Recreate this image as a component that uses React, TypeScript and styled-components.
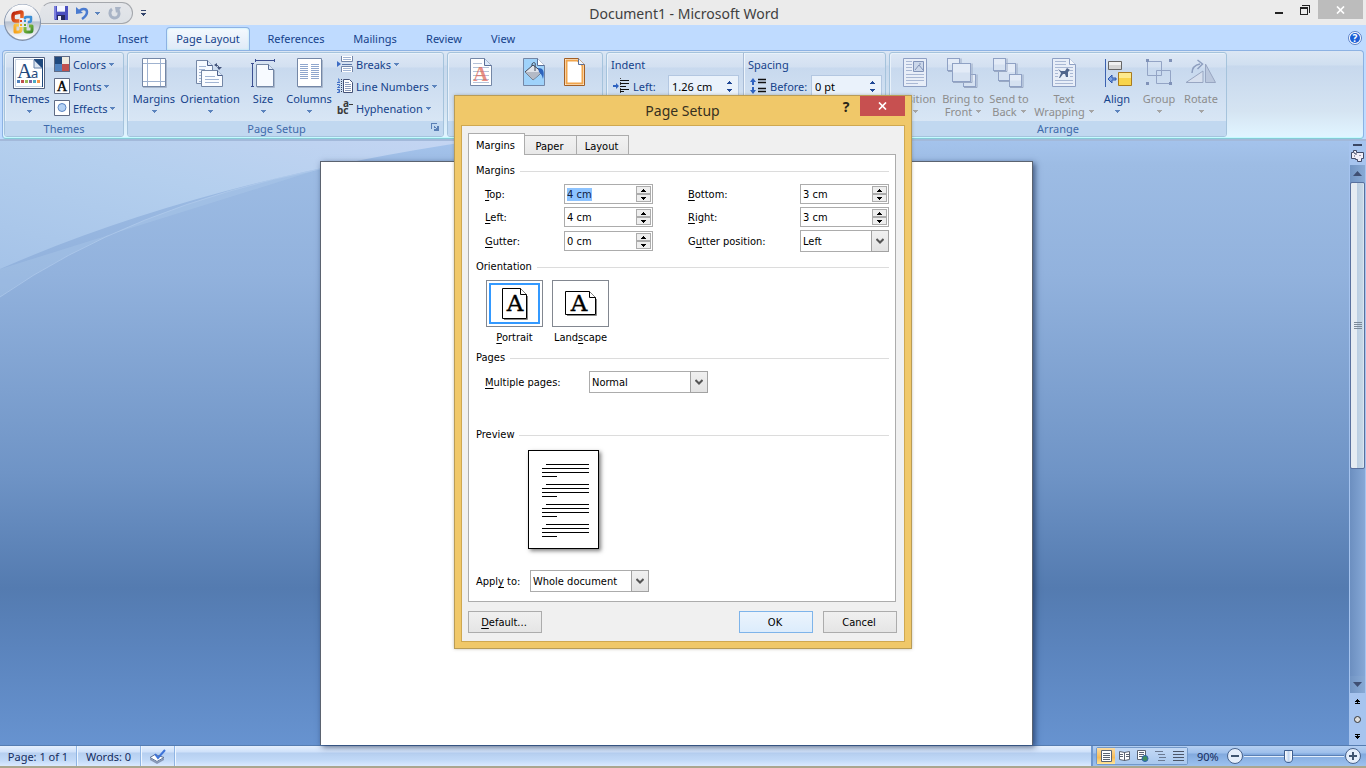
import React, { useEffect, useRef } from "react";
import styled, { createGlobalStyle, css } from "styled-components";

const uiFont = `"Noto Sans", "Open Sans", sans-serif`;
const dialogFont = `"DejaVu Sans Condensed", "DejaVu Sans", sans-serif`;
const navy = "#15428b";
const muted = "#8d8d8d";

const GlobalStyle = createGlobalStyle`
  * { box-sizing: border-box; }
  body { margin: 0; overflow: hidden; font-family: ${uiFont}; font-size: 11px; color: ${navy}; }
  button, input, select { font: inherit; color: inherit; margin: 0; padding: 0; border-radius: 0; }
  button { background: none; border: 0; }
  svg { display: block; flex: none; }
`;

const Window = styled.div`
  display: flex;
  flex-direction: column;
  height: 100vh;
  position: relative;
  background: #bfdbff;
`;

/* ---------- title bar ---------- */

const TitleBar = styled.header`
  display: flex;
  align-items: flex-start;
  height: 25px;
  background: #ebebeb;
  padding-left: 40px;
`;

const QuickAccess = styled.div`
  display: flex;
  align-items: center;
  gap: 8px;
  width: 93px;
  height: 22px;
  margin-top: 2px;
  padding-left: 13px;
  border: 1px solid #a4a7ac;
  border-left-color: transparent;
  border-radius: 12px 11px 11px 0;
  background: linear-gradient(#e4e6ea, #dde1e6);
`;

const PlainButton = styled.button`
  display: flex;
  align-items: center;
  justify-content: center;
`;

const SplitTool = styled(PlainButton)`
  gap: 5px;
`;

const CustomizeButton = styled(PlainButton)`
  width: 21px;
  height: 25px;
`;

const WindowTitle = styled.h1`
  flex: 1;
  margin: 0;
  padding-right: 52px;
  font-size: 14px;
  line-height: 27px;
  font-weight: 400;
  text-align: center;
  color: #404040;
`;

const WindowControls = styled.div`
  display: flex;
  padding-right: 3px;
`;

const WindowButton = styled(PlainButton)<{ $close?: boolean }>`
  width: ${(p) => (p.$close ? 45 : 26)}px;
  height: 19px;
  background: ${(p) => (p.$close ? "#bcbcbc" : "transparent")};
`;

const OfficeButton = styled(PlainButton)`
  position: absolute;
  left: 3px;
  top: 3px;
  z-index: 2;
`;

/* ---------- tabs ---------- */

const TabRow = styled.nav`
  display: flex;
  align-items: flex-end;
  height: 25px;
  padding: 0 4px 0 46px;
`;

const RibbonTab = styled.button<{ $width: number; $active?: boolean }>`
  width: ${(p) => p.$width}px;
  height: 23px;
  padding-bottom: 1px;
  border: 1px solid transparent;
  border-bottom: 0;
  border-radius: 4px 4px 0 0;
  ${(p) =>
    p.$active &&
    css`
      margin: 0 2px 0 4px;
      border-color: #8db2e3;
      background: linear-gradient(#f4f9fe, #dfeaf7);
      box-shadow: inset 0 0 2px #9be8f5;
    `}
`;

const Spacer = styled.div`
  flex: 1;
`;

const HelpButton = styled(PlainButton)`
  align-self: center;
`;

/* ---------- ribbon ---------- */

const Ribbon = styled.section`
  display: flex;
  gap: 3px;
  height: 89px;
  margin: 0 2px;
  padding: 1px 1px 2px;
  border: 1px solid #8db2e3;
  border-bottom-color: #86cbd6;
  border-radius: 4px;
  background: linear-gradient(#dbe6f4 0, #d0dff0 14px, #c7d8ed 15px, #d5e4f2 60px, #e0f4ff 84px);
  box-shadow: inset 0 -1px 0 #c4fbff;
`;

const Group = styled.section<{ $width: number }>`
  display: flex;
  flex-direction: column;
  width: ${(p) => p.$width}px;
  height: 85px;
  border: 1px solid #a5c3dc;
  border-radius: 3px;
  background: linear-gradient(#dde8f5 0, #d3e0f1 14px, #c8d9ee 15px, #d8e6f5 68px);
  box-shadow: inset 1px 1px 0 #e8f1fa;
  overflow: hidden;
`;

const GroupBody = styled.div<{ $pad?: number }>`
  display: flex;
  flex: 1;
  padding-left: ${(p) => p.$pad ?? 1}px;
`;

const GroupTitle = styled.div<{ $launcher?: boolean }>`
  position: relative;
  display: flex;
  align-items: center;
  justify-content: center;
  height: 15px;
  padding-right: ${(p) => (p.$launcher ? 18 : 0)}px;
  line-height: 15px;
  color: #3e6aaa;
  background: #c1d8f0;
`;

const Launcher = styled(PlainButton)`
  position: absolute;
  right: 4px;
  top: 2px;
`;

const LargeTool = styled.button<{ $width: number }>`
  display: flex;
  flex-direction: column;
  align-items: center;
  width: ${(p) => p.$width}px;
  padding-top: 4px;
  line-height: 13px;
  white-space: nowrap;
  color: ${navy};
  &:disabled { color: ${muted}; }
`;

const ToolLabel = styled.span`
  margin-top: 3px;
`;

const ToolSecondLine = styled.span`
  display: flex;
  align-items: center;
  gap: 4px;
  height: 13px;
`;

const SmallStack = styled.div<{ $gap: number }>`
  display: flex;
  flex-direction: column;
  margin-left: ${(p) => p.$gap}px;
`;

const SmallTool = styled.button`
  display: flex;
  align-items: center;
  gap: 3px;
  height: 22px;
  white-space: nowrap;
`;

const ParagraphColumn = styled.div<{ $width: number; $divided?: boolean }>`
  width: ${(p) => p.$width}px;
  padding-left: ${(p) => (p.$divided ? 4 : 3)}px;
  ${(p) => p.$divided && css`border-left: 1px solid #a9bcd6; box-shadow: inset 1px 0 0 #eef5fc;`}
`;

const ColumnHeading = styled.div`
  height: 22px;
  padding-top: 1px;
  line-height: 22px;
`;

const MeasureRow = styled.label`
  display: flex;
  align-items: center;
  height: 22px;
  padding-left: 2px;
`;

const MeasureName = styled.span<{ $width: number }>`
  width: ${(p) => p.$width}px;
  padding-left: 4px;
`;

const MeasureBox = styled.span`
  display: flex;
  align-items: center;
  width: 71px;
  height: 22px;
  padding: 0 6px 0 3px;
  border: 1px solid #b3c7e1;
  background: #eaf2fb;
  color: #000;
`;

const MeasureInput = styled.input`
  flex: 1;
  min-width: 0;
  border: 0;
  background: none;
  outline: none;
`;

/* ---------- document area ---------- */

const Workspace = styled.main`
  position: relative;
  display: flex;
  flex: 1;
  min-height: 0;
  background: linear-gradient(#a4c3ec 0, #9dbce4 4%, #92b2dd 22%, #6f94c6 55%, #547bb0 74%, #5b84bd 84%, #6793d0 100%);
  border-top: 2px solid #a3b9da;
`;

const Swoosh = styled.svg`
  position: absolute;
  left: 0;
  top: 0;
`;

const Canvas = styled.div`
  position: relative;
  display: flex;
  flex: 1;
  justify-content: center;
  padding: 20px 0 0 4px;
`;

const Paper = styled.article`
  width: 713px;
  border: 1px solid #5b6370;
  border-bottom: 0;
  background: #fff;
  box-shadow: 2px 2px 6px rgba(20, 40, 80, 0.7);
`;

const ScrollColumn = styled.div`
  position: relative;
  display: flex;
  flex-direction: column;
  align-items: center;
  width: 17px;
  background: #a6c4ef;
`;

const SplitHandle = styled.div`
  width: 9px;
  height: 2px;
  margin: 3px 0 4px;
  background: #3b4764;
`;

const ScrollArrow = styled(PlainButton)<{ $top?: number }>`
  width: 15px;
  height: 17px;
  margin-top: ${(p) => p.$top ?? 0}px;
  background: linear-gradient(90deg, #7295c4, #89aad5);
`;

const ScrollTrack = styled.div`
  flex: 1;
  width: 15px;
  background: linear-gradient(90deg, #6c8fc0, #86a8d6);
`;

const ScrollThumb = styled.div`
  display: flex;
  align-items: center;
  justify-content: center;
  width: 15px;
  height: 58%;
  border: 1px solid #5a719e;
  border-radius: 2px;
  background: linear-gradient(90deg, #e6ecf2 0 45%, #bccfe2 50%, #c8d8e6 90%, #e6eef6);
`;

const BrowseButtons = styled.div`
  display: flex;
  flex-direction: column;
  align-items: center;
  justify-content: space-around;
  height: 52px;
`;

/* ---------- status bar ---------- */

const StatusBar = styled.footer`
  display: flex;
  height: 23px;
  line-height: 19px;
  border-top: 1px solid #567db1;
  border-bottom: 2px solid #aaa68f;
  background: linear-gradient(#e4effd 0, #cfe1fa 6px, #b6cff0 7px, #c1d9f7 14px, #dbeaff 20px);
  color: #152c5e;
`;

const StatusItem = styled.button<{ $width: number }>`
  display: flex;
  align-items: center;
  justify-content: center;
  width: ${(p) => p.$width}px;
  border-right: 1px solid #8fb4e3;
  box-shadow: 1px 0 0 #eef6ff;
`;

const ZoomArea = styled.div`
  display: flex;
  align-items: center;
  width: 275px;
  padding: 0 5px 0 1px;
  border-left: 2px solid #6f97cd;
  background: linear-gradient(#b4cff2 0, #9dbfeb 7px, #81a9de 8px, #9dc2ef 20px);
`;

const ViewButtons = styled.div`
  display: flex;
  height: 18px;
  margin: 0 9px 0 2px;
  border: 1px solid #7298c9;
  border-radius: 2px;
`;

const ViewButton = styled(PlainButton)<{ $active?: boolean }>`
  width: 18px;
  height: 16px;
  background: linear-gradient(#c3d9f5, #a9c8ee);
  ${(p) => p.$active && css`background: linear-gradient(#fbdca2, #f7bb54 60%, #ffe69a);`}
`;

const ZoomValue = styled.span`
  width: 30px;
`;

const ZoomSlider = styled.input`
  flex: 1;
  min-width: 0;
  height: 18px;
  margin: 0 1px;
  appearance: none;
  background: linear-gradient(#5a80b5, #5a80b5) 0 8px / 100% 1px no-repeat,
    linear-gradient(#e2eefc, #e2eefc) 0 9px / 100% 1px no-repeat;
  &::-webkit-slider-thumb {
    appearance: none;
    width: 9px;
    height: 13px;
    border: 1px solid #3f5f90;
    border-radius: 1px 1px 5px 5px;
    background: linear-gradient(90deg, #fff, #c3d7f1 50%, #fff);
  }
`;

/* ---------- dialog ---------- */

const Overlay = styled.div`
  position: absolute;
  inset: 0;
  z-index: 5;
  display: flex;
  justify-content: center;
  align-items: flex-start;
  padding-top: 95px;
`;

const Dialog = styled.section`
  width: 458px;
  padding: 0 6px 6px;
  border: 1px solid #b99c56;
  background: #f0c869;
  box-shadow: 0 0 3px rgba(90, 80, 50, 0.35);
  font-family: ${dialogFont};
  color: #000;
`;

const DialogHeader = styled.header`
  display: flex;
  align-items: flex-start;
  height: 29px;
`;

const DialogTitle = styled.h2`
  flex: 1;
  margin: 0;
  padding-left: 67px;
  font-family: ${uiFont};
  font-size: 14px;
  font-weight: 400;
  line-height: 29px;
  text-align: center;
  color: #37301f;
`;

const DialogHelp = styled(PlainButton)`
  width: 18px;
  height: 20px;
  margin-right: 5px;
  font-family: ${uiFont};
  font-size: 14px;
  font-weight: 700;
  color: #2a2518;
`;

const DialogClose = styled(PlainButton)`
  width: 45px;
  height: 20px;
  background: #c75050;
`;

const DialogBody = styled.div`
  padding: 7px 7px 8px 6px;
  border: 1px solid #cfa850;
  background: #f0f0f0;
`;

const DialogTabs = styled.div`
  display: flex;
  align-items: flex-end;
  height: 22px;
`;

const DialogTab = styled.button<{ $width: number; $active?: boolean }>`
  width: ${(p) => p.$width}px;
  height: 20px;
  padding: 2px 2px 0 0;
  border: 1px solid #acacac;
  border-left-width: ${(p) => (p.$active ? 1 : 0)}px;
  background: linear-gradient(#f2f2f2, #e8e8e8);
  ${(p) =>
    p.$active &&
    css`
      position: relative;
      z-index: 1;
      height: 22px;
      border-bottom: 0;
      background: #fff;
    `}
`;

const TabPanel = styled.div`
  margin: -1px 1px 0 0;
  padding: 9px 6px 9px 7px;
  border: 1px solid #acacac;
  background: #fff;
`;

const SectionTitle = styled.h3<{ $top?: number }>`
  display: flex;
  align-items: center;
  gap: 5px;
  margin: ${(p) => p.$top ?? 0}px 0 6px;
  font-size: 11px;
  font-weight: 400;
  line-height: 14px;
  &::after { content: ""; flex: 1; height: 1px; background: #dcdcdc; }
`;

const FieldGrid = styled.div`
  display: grid;
  grid-template-columns: 79px 89px 1fr 89px;
  row-gap: 3px;
  align-items: center;
  padding-left: 9px;
`;

const FieldName = styled.label<{ $inset?: boolean }>`
  padding: 2px 0 0 ${(p) => (p.$inset ? 35 : 0)}px;
  line-height: 14px;
  u { text-underline-offset: 2px; }
`;

const SpinFrame = styled.span`
  display: flex;
  height: 20px;
  padding: 1px;
  border: 1px solid #acacac;
  background: #fff;
`;

const SpinInput = styled.input`
  flex: 1;
  min-width: 0;
  padding-left: 1px;
  border: 0;
  outline: none;
  background: none;
  &::selection { background: #8cc3ff; color: #102040; }
`;

const SpinButtons = styled.span`
  display: flex;
  flex-direction: column;
  width: 15px;
`;

const SpinButton = styled(PlainButton)`
  flex: 1;
  border: 1px solid #acacac;
  background: #eee;
`;

const SelectFrame = styled.span<{ $width: number }>`
  position: relative;
  display: block;
  width: ${(p) => p.$width}px;
  height: 22px;
`;

const Select = styled.select`
  width: 100%;
  height: 22px;
  padding-left: 2px;
  appearance: none;
  border: 1px solid #acacac;
  background: #fff;
  outline: none;
`;

const SelectArrow = styled.span`
  position: absolute;
  right: 0;
  top: 0;
  display: flex;
  align-items: center;
  justify-content: center;
  width: 18px;
  height: 22px;
  border: 1px solid #a2a2a2;
  background: linear-gradient(#f0f0f0, #e3e3e3);
  pointer-events: none;
`;

const OrientationRow = styled.div`
  display: flex;
  gap: 9px;
  padding-left: 10px;
`;

const OrientationOption = styled.button`
  display: flex;
  flex-direction: column;
  align-items: center;
  gap: 4px;
  width: 57px;
  line-height: 14px;
  u { text-underline-offset: 2px; }
`;

const OrientationCard = styled.span<{ $selected?: boolean }>`
  display: flex;
  align-items: center;
  justify-content: center;
  width: 57px;
  height: 47px;
  border: 1px solid #828790;
  outline: ${(p) => (p.$selected ? "2px solid #3399ff" : "none")};
  outline-offset: -5px;
`;

const InlineField = styled.div<{ $top?: number; $label: number; $indent?: number }>`
  display: grid;
  grid-template-columns: ${(p) => p.$label}px auto;
  justify-content: start;
  align-items: center;
  margin-top: ${(p) => p.$top ?? 0}px;
  padding-left: ${(p) => p.$indent ?? 0}px;
`;

const PreviewSheet = styled.div`
  width: 71px;
  height: 99px;
  margin: 8px 0 0 52px;
  border: 1px solid #000;
  background: #fff;
  box-shadow: 2px 2px 4px rgba(0, 0, 0, 0.5);
`;

const DialogFooter = styled.footer`
  display: flex;
  gap: 10px;
  margin-top: 9px;
`;

const PushButton = styled.button<{ $primary?: boolean }>`
  width: 74px;
  height: 22px;
  padding-right: 2px;
  border: 1px solid ${(p) => (p.$primary ? "#7eb4ea" : "#acacac")};
  background: ${(p) => (p.$primary ? "linear-gradient(#ecf4fc, #dcecfc)" : "linear-gradient(#f0f0f0, #e5e5e5)")};
  u { text-underline-offset: 2px; }
`;

/* ---------- drawings ---------- */

const Caret = ({ color = "#5b83bd" }: { color?: string }) => (
  <svg width="5" height="3" viewBox="0 0 5 3" shapeRendering="crispEdges">
    <path d="M0 0h5v1H4v1H3v1H2V2H1V1H0z" fill={color} />
  </svg>
);

const SpinTriangle = ({ down, color = "#000" }: { down?: boolean; color?: string }) => (
  <svg width="5" height="3" viewBox="0 0 5 3" shapeRendering="crispEdges">
    <path d={down ? "M0 0h5v1H4v1H3v1H2V2H1V1H0z" : "M2 0h1v1h1v1h1v1H0V2h1V1h1z"} fill={color} />
  </svg>
);

const Icon = ({ size = 32, children }: { size?: number; children: React.ReactNode }) => (
  <svg width={size} height={size} viewBox={`0 0 ${size} ${size}`} overflow="visible">{children}</svg>
);

const OfficeLogo = () => (
  <svg width="39" height="39" viewBox="0 0 39 39">
    <defs>
      <linearGradient id="orb" x1="0" y1="0" x2="0" y2="1">
        <stop offset="0" stopColor="#fff" />
        <stop offset="0.46" stopColor="#e3e6ec" />
        <stop offset="0.5" stopColor="#b8c2d1" />
        <stop offset="1" stopColor="#fff" />
      </linearGradient>
      <linearGradient id="logoRed" x1="0" y1="0" x2="1" y2="1">
        <stop offset="0" stopColor="#b9200c" />
        <stop offset="1" stopColor="#f5772b" />
      </linearGradient>
      <linearGradient id="logoYellow" x1="0" y1="1" x2="1" y2="0">
        <stop offset="0" stopColor="#f6a11b" />
        <stop offset="1" stopColor="#fdd55a" />
      </linearGradient>
      <linearGradient id="logoGreen" x1="0" y1="0" x2="1" y2="1">
        <stop offset="0" stopColor="#8fc63d" />
        <stop offset="1" stopColor="#3f8a2c" />
      </linearGradient>
    </defs>
    <circle cx="19.500" cy="19.500" r="18.500" fill="#8292ab" />
    <circle cx="19.500" cy="19" r="17.500" fill="url(#orb)" />
    <g fill="none" strokeLinejoin="round">
      <path d="M17 18h-4q-3 0-3-3v-2q0-3 3-3l5-1q1 0 1 1v5" stroke="url(#logoRed)" strokeWidth="3.500" />
      <path d="M22 18v-3q0-1 1-1h5v3q0 2-2 2h-1" stroke="#3c8fd6" strokeWidth="2.500" />
      <path d="M16 22h-3q-1 0-1 1v6h3q3 0 3-3v-2" stroke="url(#logoYellow)" strokeWidth="3" />
      <path d="M22 24v3q0 2 2 2h3q2 0 2-2v-4h-3" stroke="url(#logoGreen)" strokeWidth="3" />
    </g>
    <path d="M16 16h8v8h-8z" fill="#fff" fillOpacity="0.500" />
    <path d="M17 17h2v2h-2z" fill="#e2431c" />
    <path d="M21 17h2v2h-2z" fill="#3c8fd6" />
    <path d="M17 21h2v2h-2z" fill="#f3ab22" />
    <path d="M21 21h2v2h-2z" fill="#65a82e" />
  </svg>
);

const SaveIcon = () => (
  <svg width="14" height="14" viewBox="0 0 14 14">
    <path d="M0 0h14v14H1L0 13z" fill="#4a4fc0" />
    <path d="M0 0h2v13H0z" fill="#7c80dc" />
    <path d="M3 0h8v6H3z" fill="#f4f6ff" />
    <path d="M3 5h8v1H3z" fill="#b7c0e8" />
    <path d="M3 9h8v5H3z" fill="#25285e" />
    <path d="M4 10h3v4H4z" fill="#eceffa" />
  </svg>
);

const UndoIcon = () => (
  <svg width="14" height="14" viewBox="0 0 14 14">
    <path d="M3 6c2-4 8-4 8 0 0 3-2 5-5 7" fill="none" stroke="#4a7bd0" strokeWidth="2.500" />
    <path d="M0 1l0 7 7-1z" fill="#4a7bd0" />
  </svg>
);

const RedoIcon = () => (
  <svg width="14" height="14" viewBox="0 0 14 14">
    <path d="M4 3C1 5 1 11 6 12c5 0 6-4 4-8" fill="none" stroke="#a9b4c6" strokeWidth="3" />
    <path d="M7 1h6l-1 2-4 4z" fill="#a9b4c6" />
  </svg>
);

const ThemesIcon = () => (
  <Icon>
    <path d="M.5.500h31v31H.5z" fill="#fff" stroke="#52617f" />
    <path d="M2.500 2.500h27v27h-27z" fill="none" stroke="#c7d3e2" />
    <path d="M21 2h9v28h-1V11L21 3z" fill="#1f497d" />
    <path d="M21 3v8h8z" fill="#dbe5f1" stroke="#6781a8" />
    <text x="4" y="21" fontFamily="Liberation Serif" fontSize="21" fill="#1f497d">
      A<tspan x="18" y="21" fontFamily="Noto Sans" fontSize="13">a</tspan>
    </text>
    <g shapeRendering="crispEdges">
      <path d="M4 23h3v3H4z" fill="#4f81bd" /><path d="M8 23h3v3H8z" fill="#c0504d" />
      <path d="M12 23h3v3h-3z" fill="#9bbb59" /><path d="M16 23h3v3h-3z" fill="#8064a2" />
      <path d="M20 23h3v3h-3z" fill="#4bacc6" /><path d="M24 23h3v3h-3z" fill="#f79646" />
    </g>
  </Icon>
);

const ColorsIcon = () => (
  <Icon size={16}>
    <path d="M0 0h16v16H0z" fill="#5f6b85" />
    <path d="M1 1h7v7H1z" fill="#1f497d" /><path d="M8 1h7v7H8z" fill="#eeece1" />
    <path d="M1 8h7v7H1z" fill="#4f81bd" /><path d="M8 8h7v7H8z" fill="#c0504d" />
  </Icon>
);

const FontsIcon = () => (
  <Icon size={16}>
    <path d="M.5.500h15v15H.5z" fill="#fff" stroke="#5f6b85" />
    <text x="3" y="13" fontFamily="Liberation Serif" fontSize="14" fill="#000" stroke="#000" strokeWidth="0.400">A</text>
  </Icon>
);

const EffectsIcon = () => (
  <Icon size={16}>
    <path d="M.5.500h15v15H.5z" fill="#fff" stroke="#5f6b85" />
    <circle cx="8" cy="7.500" r="4" fill="#b5d2f5" stroke="#5c86c4" />
  </Icon>
);

const MarginsIcon = () => (
  <Icon>
    <path d="M4.500 1.500h23v28h-23z" fill="#fff" stroke="#7487a6" />
    <path d="M9.500 2v27M22.500 2v27M5 6.500h22M5 24.500h22" stroke="#9fb2cf" fill="none" />
    <path d="M5 30.500h23.500V3" stroke="#a8b7cc" fill="none" />
  </Icon>
);

const OrientationIcon = () => (
  <Icon>
    <path d="M2.500 3.500h11l5 5v18h-16z" fill="#f5f9ff" stroke="#7487a6" />
    <path d="M13.500 3.500v5h5" fill="#dce8f8" stroke="#4b5f8a" />
    <path d="M5 9.500h7M5 12.500h6M5 15.500h4M5 18.500h3M5 21.500h3M5 24.500h3" stroke="#a1b4d3" />
    <path d="M7.500 13.500h16l5 5v11h-21z" fill="#fafcff" stroke="#7487a6" />
    <path d="M23.500 13.500v5h5" fill="#dce8f8" stroke="#4b5f8a" />
    <path d="M11 19.500h10M11 22.500h14M11 25.500h14" stroke="#a1b4d3" />
    <path d="M21 8c3 0 4 1 4 4" fill="none" stroke="#44557d" />
    <path d="M23 10h5l-3 3zM23 6v4l-3-2z" fill="#44557d" />
  </Icon>
);

const SizeIcon = () => (
  <Icon>
    <path d="M9.500 7.500h12l5 5v17h-17z" fill="#f7faff" stroke="#7487a6" />
    <path d="M21.500 7.500v5h5" fill="#dce8f8" stroke="#5a6f98" />
    <path d="M10 30.500h17.500V13" stroke="#a8b7cc" fill="none" />
    <path d="M9 3.500h18M8.500 2v3M27.500 2v3M5.500 7v22M4 6.500h3M4 29.500h3" stroke="#3c4f91" fill="none" />
  </Icon>
);

const ColumnsIcon = () => (
  <Icon>
    <path d="M4.500 1.500h24v28h-24z" fill="#fff" stroke="#7487a6" />
    <path d="M7 7.500h8M7 9.500h8M7 11.500h8M7 13.500h8M7 15.500h8M7 17.500h8M7 19.500h8M7 21.500h8M18 7.500h8M18 9.500h8M18 11.500h8M18 13.500h8M18 15.500h8M18 17.500h8M18 19.500h8M18 21.500h8" stroke="#8fa6cd" />
    <path d="M5 30.500h24.500V3" stroke="#a8b7cc" fill="none" />
  </Icon>
);

const BreaksIcon = () => (
  <Icon size={16}>
    <path d="M4.500 0v5.500h11V0M4.500 16v-5.500h11V16" fill="#fff" stroke="#7386aa" />
    <path d="M6 1.500h8M6 3.500h8M6 12.500h8M6 14.500h8" stroke="#a1b4d3" />
    <path d="M5 8.500h10" stroke="#5b76a8" />
    <path d="M0 5l4 3-4 3z" fill="#3d6cc4" />
  </Icon>
);

const LineNumbersIcon = () => (
  <Icon size={16}>
    <path d="M1 1h1v3M0 4.500h3M0 6.500h2.500v1.500L.5 9.500H3M0 11.500h2.500v3H0M1 13h1" stroke="#3d6cc4" fill="none" />
    <path d="M4.500 1v14" stroke="#33415e" strokeDasharray="1 1" />
    <path d="M6.500 1.500h6l3 3v10h-9z" fill="#fff" stroke="#445277" />
    <path d="M8 4.500h4M8 6.500h6M8 8.500h6M8 10.500h6M8 12.500h6" stroke="#8c9cbb" />
  </Icon>
);

const HyphenIcon = () => (
  <Icon size={16}>
    <text fontFamily="Noto Sans" fontWeight="700" fontSize="10" fill="#3a3a3a">
      <tspan x="0" y="14">bc</tspan><tspan x="6" y="7">a</tspan>
    </text>
    <path d="M12 4.500h4" stroke="#3a3a3a" />
  </Icon>
);

const WatermarkIcon = () => (
  <Icon>
    <path d="M5.500 1.500h14l7 7v20h-21z" fill="#fff" stroke="#7487a6" />
    <path d="M19.500 1.500v7h7" fill="#dce8f8" stroke="#5a6f98" />
    <path d="M8 6.500h9M8 10.500h16M8 14.500h16M8 18.500h16M8 22.500h16M8 25.500h16" stroke="#b4c2d8" />
    <text x="8" y="24" fontFamily="Liberation Serif" fontWeight="700" fontSize="21" fill="#e0604f" fillOpacity="0.700">A</text>
  </Icon>
);

const PageColorIcon = () => (
  <Icon>
    <path d="M5.500 1.500h14l7 7v20h-21z" fill="#9fd2fa" stroke="#7487a6" />
    <path d="M19.500 1.500v7h7" fill="#fff" stroke="#5a6f98" />
    <path d="M7 15l8-7 9 7-9 8z" fill="#dfe3ea" stroke="#3e4656" />
    <path d="M15 15l-8 0 8 8 9-8z" fill="#b4bac6" />
    <path d="M14 9V7c2-3 4-1 3 2v5" fill="none" stroke="#3e4656" />
    <path d="M20 11c5 0 7 3 5 11-1-4-2-5-4-7z" fill="#2d63bd" />
  </Icon>
);

const PageBordersIcon = () => (
  <Icon>
    <path d="M5.500 1.500h14l6 6v21h-20z" fill="#fff" stroke="#a35f24" />
    <path d="M7.500 3.500h11l5 5v18h-16z" fill="#fff" stroke="#f0a44b" strokeWidth="2" />
    <path d="M19.500 1.500v6h6" fill="#eef4fc" stroke="#5a6f98" />
  </Icon>
);

const IndentIcon = () => (
  <Icon size={16}>
    <path d="M7.500 0v16" stroke="#444" strokeDasharray="1 1" />
    <path d="M7 2.500h9M7 5.500h9M7 8.500h6M7 11.500h9M7 13.500h4" stroke="#111" />
    <path d="M0 7h3V5l3 3-3 3V9H0z" fill="#2e62c0" />
  </Icon>
);

const SpacingIcon = () => (
  <Icon size={16}>
    <path d="M8 1.500h8M8 4.500h8M8 10.500h8M8 13.500h8" stroke="#111" strokeWidth="1.500" />
    <path d="M3 0l3 4H4v3H2V4H0zM3 16l3-4H4V9H2v3H0z" fill="#2e62c0" />
  </Icon>
);

const PositionIcon = () => (
  <Icon>
    <path d="M4.500 1.500h23v28h-23z" fill="#e8eef8" stroke="#8ea0c4" />
    <path d="M7 4.500h6M7 7.500h6M7 10.500h6M7 13.500h6M7 17.500h18M7 20.500h18M7 23.500h18M7 26.500h12" stroke="#a9b8d4" />
    <path d="M14.500 4.500h10v10h-10z" fill="#cbd7ea" stroke="#8193b8" />
    <path d="M16 13l4-5 4 5M20 7h2" stroke="#8193b8" fill="none" />
  </Icon>
);

const Tile = ({ x, y, s }: { x: number; y: number; s: number }) => (
  <g>
    <path d={`M${x + 1} ${y + s + 0.5}h${s}v-${s}`} fill="none" stroke="#9aa9c4" />
    <rect x={x + 0.5} y={y + 0.5} width={s - 1} height={s - 1} fill="#d5e1f1" stroke="#8fa1c4" />
    <rect x={x + 1} y={y + 1} width={s - 2} height={s / 2 - 1} fill="#e3ebf7" />
  </g>
);

const BringFrontIcon = () => (
  <Icon><Tile x={0} y={1} s={13} /><Tile x={16} y={17} s={13} /><Tile x={5} y={6} s={19} /></Icon>
);

const SendBackIcon = () => (
  <Icon><Tile x={5} y={6} s={18} /><Tile x={0} y={1} s={13} /><Tile x={16} y={17} s={13} /></Icon>
);

const WrapIcon = () => (
  <Icon>
    <path d="M4.500 1.500h17l6 6v22h-23z" fill="#e8eef8" stroke="#8ea0c4" />
    <path d="M21.500 1.500v6h6" fill="#f6f9fd" stroke="#8ea0c4" />
    <path d="M7 4.500h11M7 7.500h11M7 10.500h18M7 13.500h3M22 13.500h3M7 16.500h3M22 16.500h3M7 19.500h3M22 19.500h3M7 23.500h18M7 26.500h18" stroke="#a9b8d4" />
    <path d="M10 12l3 2h4l2-3 3 2-2 2v5h-2l-1-3h-2l-3 4h-1l2-5z" fill="#51668c" />
  </Icon>
);

const AlignIcon = () => (
  <Icon>
    <path d="M4.500 2v28" stroke="#3c62b0" />
    <path d="M7.500 4.500h13v8h-13z" fill="#d5d5d5" stroke="#666" />
    <path d="M8 5h12v3H8z" fill="#f1f1f1" />
    <path d="M17.500 15.500h13v13h-13z" fill="#f8d44c" stroke="#a87b20" />
    <path d="M18 16h12v5H18z" fill="#fdea8e" />
    <path d="M7 22l4-4v3h4v2h-4v3z" fill="#7fa4e2" stroke="#2d57ad" />
  </Icon>
);

const GroupIcon = () => (
  <Icon>
    <path d="M4.500 4.500h14v14h-14zM13.500 13.500h14v13h-14z" fill="none" stroke="#93a4c5" />
    <path d="M3 2h3v3H3zM26 2h3v3h-3zM3 25h3v3H3zM26 25h3v3h-3z" fill="#8092b8" />
  </Icon>
);

const RotateIcon = () => (
  <Icon>
    <path d="M1 25.500h17V14z" fill="#d6dfee" stroke="#98a6c2" />
    <path d="M20.500 7v18.500h10z" fill="#bac7dd" stroke="#98a6c2" />
    <path d="M7 16c0-6 3-8 8-9" fill="none" stroke="#8d9ebf" strokeWidth="1.500" />
    <path d="M12.500 3l5 4-5 5" fill="none" stroke="#8d9ebf" strokeWidth="1.500" />
  </Icon>
);

const HelpIcon = () => (
  <svg width="14" height="14" viewBox="0 0 14 14">
    <circle cx="7" cy="7" r="6.500" fill="#fff" stroke="#5a7fc6" />
    <circle cx="7" cy="7" r="5" fill="#1d5fd6" />
    <text x="7" y="11" textAnchor="middle" fontFamily="Noto Sans" fontWeight="700" fontSize="10" fill="#fff">?</text>
  </svg>
);

const CrossIcon = () => (
  <svg width="9" height="8" viewBox="0 0 9 8">
    <path d="M1 .500l7 7M8 .500l-7 7" stroke="#fff" strokeWidth="1.700" />
  </svg>
);

const Chevron = () => (
  <svg width="8" height="6" viewBox="0 0 8 6">
    <path d="M.5 1L4 4.500 7.500 1" fill="none" stroke="#555" strokeWidth="2" />
  </svg>
);

const LetterSheet = ({ wide }: { wide?: boolean }) =>
  wide ? (
    <svg width="32" height="25" viewBox="0 0 32 25">
      <path d="M2 24.500h29.500V8" fill="none" stroke="#888" />
      <path d="M.5.500h24l6 6v17H.5z" fill="#fff" stroke="#000" />
      <path d="M24.500.500v6h6" fill="#fff" stroke="#000" />
      <text x="14" y="20" textAnchor="middle" fontFamily="DejaVu Serif" fontSize="23" fill="#000" stroke="#000" strokeWidth="0.400">A</text>
    </svg>
  ) : (
    <svg width="26" height="32" viewBox="0 0 26 32">
      <path d="M2 31.500h23.500V8" fill="none" stroke="#888" />
      <path d="M.5.500h18l6 6v24H.5z" fill="#fff" stroke="#000" />
      <path d="M18.500.500v6h6" fill="#fff" stroke="#000" />
      <text x="13" y="23" textAnchor="middle" fontFamily="DejaVu Serif" fontSize="23" fill="#000" stroke="#000" strokeWidth="0.400">A</text>
    </svg>
  );

const PreviewLines = () => (
  <svg width="69" height="97" viewBox="0 0 69 97" shapeRendering="crispEdges">
    {[13, 33, 53, 73].map((y) => (
      <path key={y} d={`M17 ${y}h43v1H17zM13 ${y + 4}h47v1H13zM13 ${y + 8}h47v1H13zM13 ${y + 12}h15v1H13z`} fill="#000" />
    ))}
  </svg>
);

const RulerIcon = () => (
  <svg width="13" height="13" viewBox="0 0 13 13">
    <path d="M.5 2.500h2v-2h3v2h7v6h-2v3h-4v-2h-2v-1h-4z" fill="#f2eef8" stroke="#424a68" />
    <path d="M3 3h1v1h2M9 5v1M3 6h1" stroke="#424a68" fill="none" />
  </svg>
);

const ViewIcon = ({ kind }: { kind: string }) => (
  <svg width="13" height="12" viewBox="0 0 13 12">
    {kind === "Print Layout" && <path d="M1.500.500h10v11h-10zM3 3.500h7M3 5.500h7M3 7.500h7M3 9.500h7" fill="#fff" stroke="#5a6270" />}
    {kind === "Full Screen Reading" && <path d="M1.500 1.500l5 1 5-1v8l-5 1-5-1zM6.500 2v9M2 4.500h3M2 6.500h3M8 4.500h3M8 6.500h3" fill="#fff" stroke="#5a6270" />}
    {kind === "Web Layout" && (
      <>
        <path d="M1.500.500h8v9h-8zM3 2.500h5M3 4.500h5M3 6.500h5" fill="#fff" stroke="#5a6270" />
        <circle cx="9" cy="8.500" r="3" fill="#3f8f5f" stroke="#2e62b0" />
      </>
    )}
    {kind === "Outline" && <path d="M1 1.500h8M4 4.500h7M5 7.500h7M4 10.500h7" stroke="#6b7a92" />}
    {kind === "Draft" && <path d="M1 1.500h11M1 4.500h11M1 7.500h11M1 10.500h11" stroke="#4c5668" />}
  </svg>
);

const ZoomSign = ({ plus }: { plus?: boolean }) => (
  <svg width="16" height="16" viewBox="0 0 16 16">
    <circle cx="8" cy="8" r="7.500" fill="#e5eefb" stroke="#47628c" />
    <path d={plus ? "M4 8h8M8 4v8" : "M4 8h8"} stroke="#405570" strokeWidth="2" />
  </svg>
);

const ProofIcon = () => (
  <svg width="17" height="15" viewBox="0 0 17 15">
    <path d="M1 8.500l5-3 9 3-7 4z" fill="#fff" stroke="#5d7195" />
    <path d="M1 9v2l7 4 7-4V9l-7 4z" fill="#8797b5" />
    <path d="M6 5l3 4 7-8" fill="none" stroke="#3e74d8" strokeWidth="2" />
  </svg>
);

/* ---------- composed parts ---------- */

type ToolProps = {
  icon: React.ReactNode;
  name: string;
  width: number;
  line?: string;
  disabled?: boolean;
  iconOnly?: boolean;
};

const Large = ({ icon, name, width, line, disabled, iconOnly }: ToolProps) => (
  <LargeTool $width={width} disabled={disabled} aria-label={line ? `${name} ${line}` : name}>
    {icon}
    {!iconOnly && (
      <>
        <ToolLabel>{name}</ToolLabel>
        <ToolSecondLine>
          {line}
          <Caret color={disabled ? "#a5a5a5" : undefined} />
        </ToolSecondLine>
      </>
    )}
  </LargeTool>
);

const Small = ({ icon, name }: { icon: React.ReactNode; name: string }) => (
  <SmallTool>{icon}<span>{name}</span><Caret /></SmallTool>
);

const Measure = ({ icon, name, nameWidth, value }: { icon: React.ReactNode; name: string; nameWidth: number; value: string }) => (
  <MeasureRow>
    {icon}
    <MeasureName $width={nameWidth}>{name}</MeasureName>
    <MeasureBox>
      <MeasureInput defaultValue={value} />
      <svg width="5" height="13" viewBox="0 0 5 13" shapeRendering="crispEdges">
        <path d="M2 1h1v1h1v1h1v1H0V3h1V2h1zM0 9h5v1H4v1H3v1H2v-1H1v-1H0z" fill="#1f4795" />
      </svg>
    </MeasureBox>
  </MeasureRow>
);

const Spin = ({ id, value, inputRef }: { id: string; value: string; inputRef?: React.Ref<HTMLInputElement> }) => (
  <SpinFrame>
    <SpinInput id={id} ref={inputRef} defaultValue={value} />
    <SpinButtons>
      <SpinButton aria-label="Increase"><SpinTriangle /></SpinButton>
      <SpinButton aria-label="Decrease"><SpinTriangle down /></SpinButton>
    </SpinButtons>
  </SpinFrame>
);

const Drop = ({ id, value, width }: { id: string; value: string; width: number }) => (
  <SelectFrame $width={width}>
    <Select id={id} defaultValue={value}><option>{value}</option></Select>
    <SelectArrow><Chevron /></SelectArrow>
  </SelectFrame>
);

const PageSetupDialog = () => {
  const topMargin = useRef<HTMLInputElement>(null);
  useEffect(() => {
    topMargin.current?.focus();
    topMargin.current?.select();
  }, []);
  return (
    <Overlay>
      <Dialog role="dialog" aria-labelledby="dialog-title">
        <DialogHeader>
          <DialogTitle id="dialog-title">Page Setup</DialogTitle>
          <DialogHelp>?</DialogHelp>
          <DialogClose aria-label="Close"><CrossIcon /></DialogClose>
        </DialogHeader>
        <DialogBody>
          <DialogTabs role="tablist">
            <DialogTab role="tab" $width={57} $active>Margins</DialogTab>
            <DialogTab role="tab" $width={52}>Paper</DialogTab>
            <DialogTab role="tab" $width={52}>Layout</DialogTab>
          </DialogTabs>
          <TabPanel role="tabpanel">
            <SectionTitle>Margins</SectionTitle>
            <FieldGrid>
              <FieldName htmlFor="top"><u>T</u>op:</FieldName>
              <Spin id="top" value="4 cm" inputRef={topMargin} />
              <FieldName htmlFor="bottom" $inset><u>B</u>ottom:</FieldName>
              <Spin id="bottom" value="3 cm" />
              <FieldName htmlFor="left"><u>L</u>eft:</FieldName>
              <Spin id="left" value="4 cm" />
              <FieldName htmlFor="right" $inset><u>R</u>ight:</FieldName>
              <Spin id="right" value="3 cm" />
              <FieldName htmlFor="gutter"><u>G</u>utter:</FieldName>
              <Spin id="gutter" value="0 cm" />
              <FieldName htmlFor="gutter-position" $inset>G<u>u</u>tter position:</FieldName>
              <Drop id="gutter-position" value="Left" width={89} />
            </FieldGrid>
            <SectionTitle $top={8}>Orientation</SectionTitle>
            <OrientationRow>
              <OrientationOption>
                <OrientationCard $selected><LetterSheet /></OrientationCard>
                <span><u>P</u>ortrait</span>
              </OrientationOption>
              <OrientationOption>
                <OrientationCard><LetterSheet wide /></OrientationCard>
                <span>Land<u>s</u>cape</span>
              </OrientationOption>
            </OrientationRow>
            <SectionTitle $top={6}>Pages</SectionTitle>
            <InlineField $label={104} $indent={9}>
              <FieldName htmlFor="multiple"><u>M</u>ultiple pages:</FieldName>
              <Drop id="multiple" value="Normal" width={119} />
            </InlineField>
            <SectionTitle $top={35}>Preview</SectionTitle>
            <PreviewSheet><PreviewLines /></PreviewSheet>
            <InlineField $label={54} $top={21}>
              <FieldName htmlFor="apply">Appl<u>y</u> to:</FieldName>
              <Drop id="apply" value="Whole document" width={119} />
            </InlineField>
          </TabPanel>
          <DialogFooter>
            <PushButton><u>D</u>efault...</PushButton>
            <Spacer />
            <PushButton $primary>OK</PushButton>
            <PushButton>Cancel</PushButton>
          </DialogFooter>
        </DialogBody>
      </Dialog>
    </Overlay>
  );
};

const views = ["Print Layout", "Full Screen Reading", "Web Layout", "Outline", "Draft"];

export default function App() {
  return (
    <>
      <GlobalStyle />
      <Window>
        <OfficeButton aria-label="Office Button"><OfficeLogo /></OfficeButton>
        <TitleBar>
          <QuickAccess>
            <PlainButton aria-label="Save"><SaveIcon /></PlainButton>
            <SplitTool aria-label="Undo"><UndoIcon /><Caret /></SplitTool>
            <PlainButton aria-label="Repeat"><RedoIcon /></PlainButton>
          </QuickAccess>
          <CustomizeButton aria-label="Customize Quick Access Toolbar">
            <svg width="5" height="6" viewBox="0 0 5 6" shapeRendering="crispEdges">
              <path d="M0 0h5v1H0zM0 3h5v1H4v1H3v1H2V5H1V4H0z" fill="#33446b" />
            </svg>
          </CustomizeButton>
          <WindowTitle>Document1 - Microsoft Word</WindowTitle>
          <WindowControls>
            <WindowButton aria-label="Minimize">
              <svg width="8" height="8" viewBox="0 0 8 8"><path d="M0 6h8v2H0z" fill="#222" /></svg>
            </WindowButton>
            <WindowButton aria-label="Restore">
              <svg width="10" height="10" viewBox="0 0 10 10" shapeRendering="crispEdges">
                <path d="M0 2h8v8H0zM1 4v5h6V4zM2 0h8v8H9V1H2z" fill="#222" fillRule="evenodd" />
              </svg>
            </WindowButton>
            <WindowButton $close aria-label="Close window"><CrossIcon /></WindowButton>
          </WindowControls>
        </TitleBar>

        <TabRow>
          <RibbonTab $width={58}>Home</RibbonTab>
          <RibbonTab $width={58}>Insert</RibbonTab>
          <RibbonTab $width={84} $active>Page Layout</RibbonTab>
          <RibbonTab $width={88}>References</RibbonTab>
          <RibbonTab $width={70}>Mailings</RibbonTab>
          <RibbonTab $width={68}>Review</RibbonTab>
          <RibbonTab $width={50}>View</RibbonTab>
          <Spacer />
          <HelpButton aria-label="Help"><HelpIcon /></HelpButton>
        </TabRow>

        <Ribbon>
          <Group $width={120}>
            <GroupBody>
              <Large icon={<ThemesIcon />} name="Themes" width={46} />
              <SmallStack $gap={2}>
                <Small icon={<ColorsIcon />} name="Colors" />
                <Small icon={<FontsIcon />} name="Fonts" />
                <Small icon={<EffectsIcon />} name="Effects" />
              </SmallStack>
            </GroupBody>
            <GroupTitle>Themes</GroupTitle>
          </Group>
          <Group $width={317}>
            <GroupBody>
              <Large icon={<MarginsIcon />} name="Margins" width={50} />
              <Large icon={<OrientationIcon />} name="Orientation" width={62} />
              <Large icon={<SizeIcon />} name="Size" width={44} />
              <Large icon={<ColumnsIcon />} name="Columns" width={48} />
              <SmallStack $gap={4}>
                <Small icon={<BreaksIcon />} name="Breaks" />
                <Small icon={<LineNumbersIcon />} name="Line Numbers" />
                <Small icon={<HyphenIcon />} name="Hyphenation" />
              </SmallStack>
            </GroupBody>
            <GroupTitle $launcher>
              Page Setup
              <Launcher aria-label="Page Setup options">
                <svg width="8" height="8" viewBox="0 0 8 8" shapeRendering="crispEdges">
                  <path d="M0 0h6v1H1v5H0zM3 3h1v1h1v1h1V3h2v5H3V6h2V5H3z" fill="#5a7fb5" />
                </svg>
              </Launcher>
            </GroupTitle>
          </Group>
          <Group $width={156}>
            <GroupBody $pad={8}>
              <Large icon={<WatermarkIcon />} name="Watermark" width={50} iconOnly />
              <Large icon={<PageColorIcon />} name="Page Color" width={56} iconOnly />
              <Large icon={<PageBordersIcon />} name="Page Borders" width={26} iconOnly />
            </GroupBody>
            <GroupTitle />
          </Group>
          <Group $width={280}>
            <GroupBody>
              <ParagraphColumn $width={135}>
                <ColumnHeading>Indent</ColumnHeading>
                <Measure icon={<IndentIcon />} name="Left:" nameWidth={39} value="1.26 cm" />
              </ParagraphColumn>
              <ParagraphColumn $width={141} $divided>
                <ColumnHeading>Spacing</ColumnHeading>
                <Measure icon={<SpacingIcon />} name="Before:" nameWidth={45} value="0 pt" />
              </ParagraphColumn>
            </GroupBody>
            <GroupTitle />
          </Group>
          <Group $width={338}>
            <GroupBody>
              <Large icon={<PositionIcon />} name="Position" width={48} disabled />
              <Large icon={<BringFrontIcon />} name="Bring to" line="Front" width={48} disabled />
              <Large icon={<SendBackIcon />} name="Send to" line="Back" width={44} disabled />
              <Large icon={<WrapIcon />} name="Text" line="Wrapping" width={66} disabled />
              <Large icon={<AlignIcon />} name="Align" width={40} />
              <Large icon={<GroupIcon />} name="Group" width={44} disabled />
              <Large icon={<RotateIcon />} name="Rotate" width={40} disabled />
            </GroupBody>
            <GroupTitle>Arrange</GroupTitle>
          </Group>
        </Ribbon>

        <Workspace>
          <Swoosh width="500" height="160" viewBox="0 0 500 160">
            <defs>
              <linearGradient id="sky" x1="0" y1="1" x2="1" y2="0">
                <stop offset="0" stopColor="#a5c3e8" />
                <stop offset="0.500" stopColor="#b4cfee" />
                <stop offset="1" stopColor="#c6d6f3" />
              </linearGradient>
            </defs>
            <path d="M0 156Q130 66 320 28L0 128z" fill="#b8d4f0" fillOpacity="0.250" />
            <path d="M0 156Q130 66 320 28" fill="none" stroke="#b5cfee" strokeOpacity="0.600" />
            <path d="M0 0h500v-4Q210 36 0 128z" fill="url(#sky)" />
          </Swoosh>
          <Canvas><Paper /></Canvas>
          <ScrollColumn>
            <SplitHandle />
            <RulerIcon />
            <ScrollArrow $top={2} aria-label="Scroll up">
              <svg width="9" height="5" viewBox="0 0 9 5"><path d="M4.500 0L9 5H0z" fill="#3f4f73" /></svg>
            </ScrollArrow>
            <ScrollTrack>
              <ScrollThumb>
                <svg width="8" height="7" viewBox="0 0 8 7" shapeRendering="crispEdges">
                  <path d="M0 0h8v1H0zM0 2h8v1H0zM0 4h8v1H0zM0 6h8v1H0z" fill="#7c8a99" />
                </svg>
              </ScrollThumb>
            </ScrollTrack>
            <ScrollArrow aria-label="Scroll down">
              <svg width="9" height="5" viewBox="0 0 9 5"><path d="M0 0h9L4.500 5z" fill="#3f4f73" /></svg>
            </ScrollArrow>
            <BrowseButtons>
              <PlainButton aria-label="Previous Page">
                <svg width="5" height="6" viewBox="0 0 5 6" shapeRendering="crispEdges"><path d="M2 0h1v1h1v1h1v1H0V2h1V1h1zM2 3h1v1h2v1H0V4h2z" fill="#000" /></svg>
              </PlainButton>
              <PlainButton aria-label="Select Browse Object">
                <svg width="7" height="7" viewBox="0 0 7 7"><circle cx="3.500" cy="3.500" r="3" fill="#ddd" stroke="#333" /></svg>
              </PlainButton>
              <PlainButton aria-label="Next Page">
                <svg width="5" height="6" viewBox="0 0 5 6" shapeRendering="crispEdges"><path d="M0 0h5v1H3v1h2v1H4v1H3v1H2V4H1V3H0V2h2V1H0z" fill="#000" /></svg>
              </PlainButton>
            </BrowseButtons>
          </ScrollColumn>
        </Workspace>

        <StatusBar>
          <StatusItem $width={77}>Page: 1 of 1</StatusItem>
          <StatusItem $width={64}>Words: 0</StatusItem>
          <StatusItem $width={34} aria-label="Proofing"><ProofIcon /></StatusItem>
          <Spacer />
          <ZoomArea>
            <ViewButtons>
              {views.map((view, i) => (
                <ViewButton key={view} aria-label={view} $active={i === 0}><ViewIcon kind={view} /></ViewButton>
              ))}
            </ViewButtons>
            <ZoomValue>90%</ZoomValue>
            <PlainButton aria-label="Zoom out"><ZoomSign /></PlainButton>
            <ZoomSlider type="range" min={0} max={100} defaultValue={44} aria-label="Zoom" />
            <PlainButton aria-label="Zoom in"><ZoomSign plus /></PlainButton>
          </ZoomArea>
        </StatusBar>

        <PageSetupDialog />
      </Window>
    </>
  );
}
